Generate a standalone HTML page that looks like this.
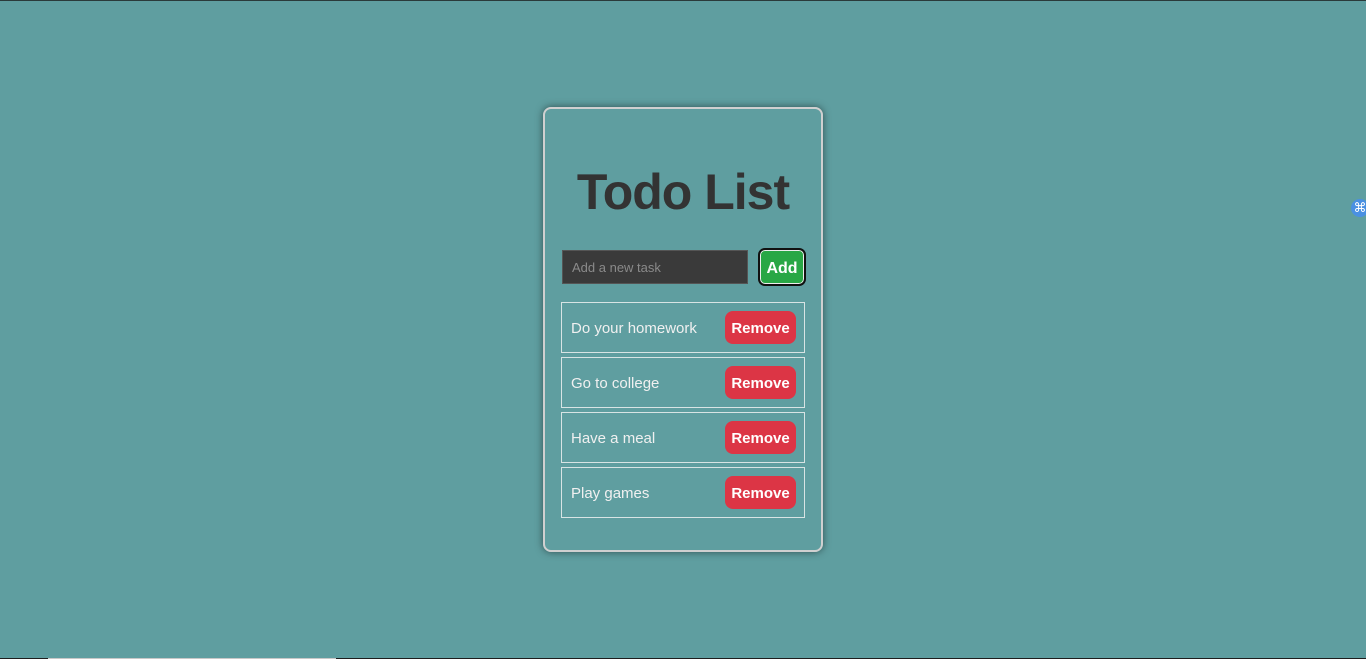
<!DOCTYPE html>
<html><head><style>
html,body{margin:0;padding:0;width:1366px;height:659px;overflow:hidden;background:#5f9ea0;font-family:"Liberation Sans",sans-serif;}
.top{position:absolute;left:0;top:0;width:1366px;height:1px;background:#2a3a3a;}
.bot{position:absolute;left:0;top:658px;width:1366px;height:1px;background:#1e1e1e;}
.bot2{position:absolute;left:48px;top:658px;width:288px;height:1px;background:#c8c8c8;}
.card{position:absolute;left:543px;top:107px;width:276px;height:441px;border:2px solid #d0d0d0;border-radius:8px;box-shadow:0 0 8px rgba(0,0,0,.5);}
h1{position:absolute;left:0;width:276px;top:53px;margin:0;text-align:center;font-size:50px;font-weight:bold;color:#333;line-height:60px;letter-spacing:-1px;}
.inp{position:absolute;left:17px;top:141px;width:186px;height:34px;background:#3a3a3a;border:1px solid #555;box-sizing:border-box;color:#8a8a8a;font-size:13px;line-height:34px;padding-left:9px;}
.add{position:absolute;left:213px;top:139px;width:48px;height:38px;box-sizing:border-box;background:#28a745;border:2px solid #111;box-shadow:0 0 0 1px #eee inset;border-radius:7px;color:#fff;font-weight:bold;font-size:16px;text-align:center;line-height:38px;}
.item{position:absolute;left:16px;width:244px;height:51px;box-sizing:border-box;border:1px solid #d8e4e4;}
.item span{position:absolute;left:9px;top:17px;font-size:15px;color:#f0f0f0;}
.item b{position:absolute;left:163px;top:8px;width:71px;height:33px;background:#dc3545;border-radius:8px;color:#fff;font-size:15px;text-align:center;line-height:36px;}
</style></head><body>
<div class="top"></div>
<div class="card">
<h1>Todo List</h1>
<div class="inp">Add a new task</div>
<div class="add">Add</div>
<div class="item" style="top:193px"><span>Do your homework</span><b>Remove</b></div>
<div class="item" style="top:248px"><span>Go to college</span><b>Remove</b></div>
<div class="item" style="top:303px"><span>Have a meal</span><b>Remove</b></div>
<div class="item" style="top:358px"><span>Play games</span><b>Remove</b></div>
</div>
<div style="position:absolute;left:1351px;top:199px;width:18px;height:18px;border-radius:9px;background:#4a90e2;color:#fff;font-size:13px;line-height:18px;text-align:center;">⌘</div>
<div class="bot"></div><div class="bot2"></div>
</body></html>
